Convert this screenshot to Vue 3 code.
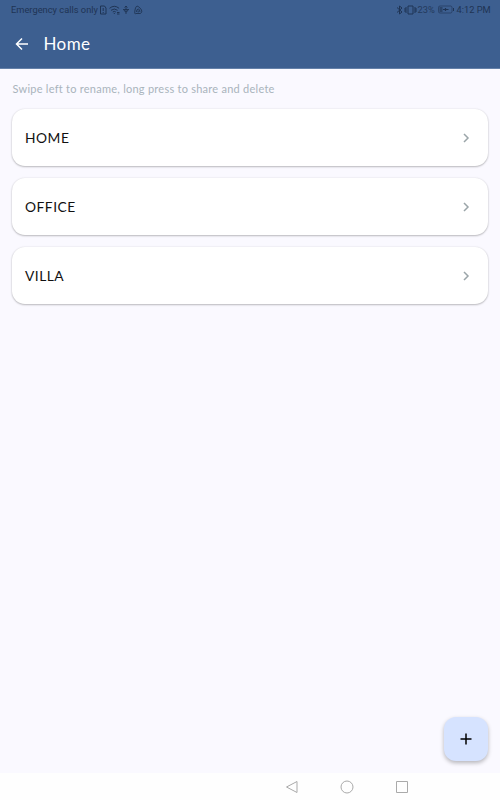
<script setup>
import { ref } from 'vue';

const places = ref([
  { id: 1, name: 'HOME' },
  { id: 2, name: 'OFFICE' },
  { id: 3, name: 'VILLA' }
]);
</script>

<template>
  <div class="screen">
    <header class="top">
      <div class="status">
        <span class="carrier">Emergency calls only</span>
        <svg class="left-icons" width="44" height="10" viewBox="0 0 44 10" fill="none" stroke="currentColor">
          <path d="M1.500 1h4l1.500 2v6H1.500zM4.200 3v3M4.200 7v1" />
          <path d="M10.500 3.300q4.800-4 9.600 0M12 5.300q3.300-2.600 6.600 0M13.800 7q1.500-1.200 3 0M15.300 8v1M18 7.500h2.500M18 9h2.500" />
          <path d="M27 1v8M25.500 2.500L27 1l1.500 1.500M24 4.500h6M25 4.500q0 2 2 2.500 2-.5 2-2.500" stroke-width="0.9" />
          <path d="M37 8.500h4.500q2-1.500 1-3.500T39.200 1.500 36 5t1 3.500zM37.500 7q0-3 1.700-3t1.700 3M39.200 5.500v2" stroke-width="0.9" />
        </svg>
        <div class="right">
          <svg width="21" height="10" viewBox="0 0 21 10" fill="none" stroke="currentColor">
            <path d="M1 2.500l5 4.500-2.500 2V1L6 3 1 7.500" />
            <path d="M12 1h5v8h-5zM10 2v6M8.500 3l1 1-1 1 1 1-1 1M19 2v6M20.500 3l-1 1 1 1-1 1 1 1" />
          </svg>
          <span class="percent">23%</span>
          <svg class="battery" width="17" height="9" viewBox="0 0 17 9" fill="none" stroke="currentColor">
            <rect x="0.500" y="1" width="13.500" height="7" rx="1.500" opacity="0.6" />
            <rect x="1.500" y="2" width="3" height="5" fill="currentColor" stroke="none" opacity="0.6" />
            <path d="M5 4.500h5.500M7.500 3v3" stroke-width="1.200" />
            <path d="M15.500 3v3" />
          </svg>
          <span class="time">4:12 PM</span>
        </div>
      </div>
      <div class="bar">
        <svg class="back" width="14" height="14" viewBox="0 0 14 14" fill="none" stroke="currentColor" stroke-width="1.500">
          <path d="M13 7H2M7 1.500L1.500 7 7 12.500" />
        </svg>
        <h1>Home</h1>
      </div>
    </header>

    <main>
      <p class="hint">Swipe left to rename, long press to share and delete</p>
      <ul>
        <li v-for="place in places" :key="place.id">
          <span>{{ place.name }}</span>
          <svg width="8" height="10" viewBox="0 0 8 10" fill="none" stroke="currentColor" stroke-width="1.500">
            <path d="M2 1l4 4-4 4" />
          </svg>
        </li>
      </ul>
      <button class="add" aria-label="Add">
        <svg width="12" height="12" viewBox="0 0 12 12" fill="none" stroke="currentColor" stroke-width="1.500">
          <path d="M6 .5v11M.5 6h11" />
        </svg>
      </button>
    </main>

    <nav>
      <svg width="14" height="14" viewBox="0 0 14 14"><path d="M12 1.500v11L1.500 7z" /></svg>
      <svg width="14" height="14" viewBox="0 0 14 14"><circle cx="7" cy="7" r="6" /></svg>
      <svg width="14" height="14" viewBox="0 0 14 14"><path d="M1.500 1.500h11v11h-11z" /></svg>
    </nav>
  </div>
</template>

<style>
body {
  margin: 0;
}
</style>

<style scoped>
.screen {
  display: flex;
  flex-direction: column;
  height: 100vh;
  background: #faf9ff;
  font-family: Lato, sans-serif;
}

.top {
  height: 69px;
  box-sizing: border-box;
  background: #3d5f90;
  border-bottom: 1px solid #6480a8;
}

.status {
  display: flex;
  align-items: center;
  height: 19px;
  padding: 0 9.5px 0 11px;
  color: #1f3454;
  font-family: Roboto, sans-serif;
  font-size: 9.3px;
  white-space: nowrap;
}

.carrier {
  width: 88px;
}

.right {
  display: flex;
  align-items: center;
  margin-left: auto;
}

.right svg {
  flex: none;
}

.percent {
  width: 18px;
  margin-left: 0.5px;
  opacity: 0.85;
}

.battery {
  margin: 0 2px;
}

.time {
  width: 34px;
}

.bar {
  display: flex;
  align-items: center;
  height: 49px;
  padding-left: 15px;
  color: #fff;
}

h1 {
  margin: 0 0 0 14.5px;
  font-size: 17px;
  font-weight: 400;
  line-height: 24px;
  letter-spacing: 0.4px;
}

main {
  display: flex;
  flex: 1;
  flex-direction: column;
  padding: 0 12px 12px;
}

.hint {
  margin: 12px 0 12px 0.5px;
  color: #a9b4bc;
  font-size: 11px;
  line-height: 16px;
  letter-spacing: 0.25px;
}

ul {
  display: grid;
  gap: 12px;
  margin: 0;
  padding: 0;
  list-style: none;
}

li {
  display: flex;
  align-items: center;
  justify-content: space-between;
  height: 57px;
  padding: 0 18.5px 0 13px;
  box-sizing: border-box;
  border-radius: 13px;
  background: #fff;
  box-shadow: 0 1px 2px rgba(0, 0, 0, 0.24), 0 0 2px rgba(0, 0, 0, 0.1);
  color: #111;
  font-size: 13.8px;
  letter-spacing: 0.5px;
}

li svg {
  color: #9ba5a9;
}

.add {
  display: flex;
  align-items: center;
  justify-content: center;
  width: 44px;
  height: 44px;
  margin-top: auto;
  margin-left: auto;
  padding: 0;
  border: 0;
  border-radius: 12px;
  background: #d6e3ff;
  box-shadow: 0 2px 4px rgba(0, 0, 0, 0.28);
  color: #000;
}

nav {
  display: flex;
  align-items: center;
  gap: 41px;
  height: 27px;
  padding-left: 285px;
  background: #fefefe;
}

nav svg {
  fill: none;
  stroke: #aaa;
}
</style>
